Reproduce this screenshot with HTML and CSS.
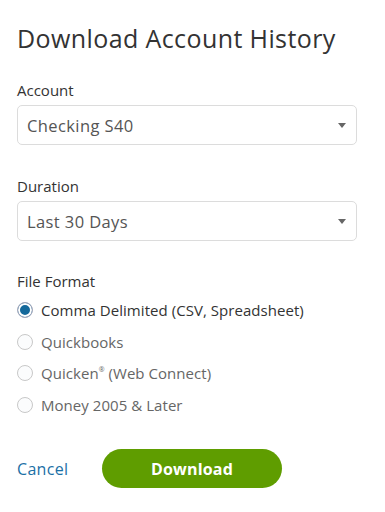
FILE: index.html
```html
<!DOCTYPE html>
<html>
<head>
<meta charset="utf-8">
<link rel="stylesheet" href="styles.css">
</head>
<body>
<div class="dialog">
  <h1 class="title">Download Account History</h1>
  <div class="field">
    <div class="label">Account</div>
    <div class="select"><span>Checking S40</span><span class="caret"></span></div>
  </div>
  <div class="field">
    <div class="label">Duration</div>
    <div class="select"><span>Last 30 Days</span><span class="caret"></span></div>
  </div>
  <div class="field format">
    <div class="label">File Format</div>
    <div class="radios">
      <div class="radio checked"><span class="dot"></span><span class="rtext">Comma Delimited (CSV, Spreadsheet)</span></div>
      <div class="radio"><span class="dot"></span><span class="rtext">Quickbooks</span></div>
      <div class="radio"><span class="dot"></span><span class="rtext">Quicken<sup class="reg">®</sup> (Web Connect)</span></div>
      <div class="radio"><span class="dot"></span><span class="rtext">Money 2005 &amp; Later</span></div>
    </div>
  </div>
  <div class="actions">
    <a class="cancel">Cancel</a>
    <button class="download">Download</button>
  </div>
</div>
</body>
</html>
```
FILE: styles.css
```css
html, body {
  margin: 0;
  padding: 0;
  background: #fff;
}
body {
  font-family: "Open Sans", "Liberation Sans", sans-serif;
  color: #333;
}
.dialog {
  padding: 21px 28px 0 17px;
  display: flex;
  flex-direction: column;
}
.title {
  margin: 0;
  font-weight: 400;
  font-size: 25px;
  line-height: 34px;
  color: #333;
  letter-spacing: 0.4px;
}
.field {
  display: flex;
  flex-direction: column;
}
.field:nth-of-type(1) { margin-top: 25px; }
.field:nth-of-type(2) { margin-top: 31px; }
.format { margin-top: 30px; }
.label {
  font-size: 15px;
  line-height: 20px;
  color: #333;
  margin-bottom: 5px;
}
.select {
  box-sizing: border-box;
  height: 40px;
  border: 1px solid #dcdcdc;
  border-radius: 5px;
  display: flex;
  align-items: center;
  justify-content: space-between;
  padding: 0 10px 0 9px;
  font-size: 16.5px;
  letter-spacing: 0.4px;
  color: #555;
}
.caret {
  width: 0;
  height: 0;
  border-left: 4px solid transparent;
  border-right: 4px solid transparent;
  border-top: 5px solid #666;
}
.radios {
  display: flex;
  flex-direction: column;
  gap: 11.7px;
  margin-top: 4px;
}
.radio {
  display: flex;
  align-items: center;
  height: 20px;
  gap: 8px;
}
.dot {
  box-sizing: border-box;
  width: 16px;
  height: 16px;
  border-radius: 50%;
  border: 1px solid #c8c8c8;
  background: #fbfcfd;
  flex: none;
}
.checked .dot {
  background: #15699b;
  box-shadow: inset 0 0 0 2px #fff;
  border-color: #aab;
}
.rtext {
  font-size: 15px;
  letter-spacing: 0.05px;
  color: #666;
}
.checked .rtext { color: #333; }
.reg {
  font-size: 7px;
  vertical-align: top;
  position: relative;
  top: 2px;
}
.actions {
  display: flex;
  align-items: center;
  margin-top: 34px;
}
.cancel {
  font-size: 16px;
  letter-spacing: 0.3px;
  color: #1b70a6;
  width: 85px;
}
.download {
  width: 180px;
  height: 39px;
  border: none;
  border-radius: 20px;
  background: #5f9d00;
  color: #fff;
  font-family: "Open Sans", "Liberation Sans", sans-serif;
  font-weight: 700;
  font-size: 16px;
  letter-spacing: 0.2px;
}
```
